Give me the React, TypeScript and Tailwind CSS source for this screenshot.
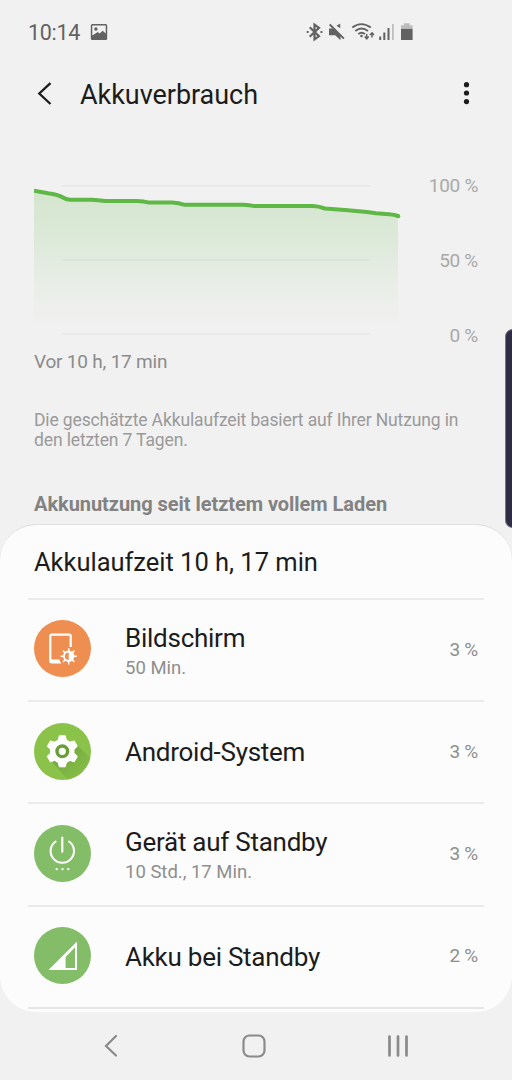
import type { ReactNode } from "react";

type UsageItem = {
  name: string;
  detail?: string;
  percent: string;
  icon: ReactNode;
};

function ScreenIcon() {
  return (
    <svg viewBox="0 0 57 57" className="mb-[3px] w-[57px] h-[57px] shrink-0">
      <circle cx="28.5" cy="28.5" r="28.5" fill="#ee8e50" />
      <path d="M27.500 43.500H17.700a2.500 2.500 0 0 1-2.500-2.500V16a2.500 2.500 0 0 1 2.500-2.500H35.300a2.500 2.500 0 0 1 2.500 2.500V27h-2.200V15.700H17.400V39.500h8Q25.800 42 27.500 43.500Z" fill="#fff" />
      <path d="M34.700 28.200v16.200M26.600 36.300h16.200M29 30.600l11.400 11.400M40.400 30.600l-11.400 11.400" stroke="#fff" strokeWidth="1.600" />
      <circle cx="34.700" cy="36.300" r="5.700" fill="#fff" />
      <path d="M34.700 32.500a3.800 3.800 0 0 0 0 7.600Z" fill="#ee8e50" />
    </svg>
  );
}

function SystemIcon() {
  return (
    <svg viewBox="0 0 57 57" className="mb-[2px] w-[57px] h-[57px] shrink-0">
      <defs>
        <linearGradient id="shadow" x1="0" y1="0" x2="1" y2="1">
          <stop offset="0.3" stopColor="#76ab40" />
          <stop offset="0.85" stopColor="#87bf48" />
        </linearGradient>
      </defs>
      <circle cx="28.5" cy="28.5" r="28.5" fill="#8bc34a" />
      <path d="M17.500 38 33.500 56.500A28.500 28.500 0 0 0 56.200 35L43 22Z" fill="url(#shadow)" />
      <g fill="#fff">
        <circle cx="28.300" cy="28.300" r="12.200" />
        <path id="teeth" d="M25.300 12.800h6l2 8h-10ZM25.300 43.800h6l2-8h-10Z" stroke="#fff" strokeWidth="1" strokeLinejoin="round" />
        <use href="#teeth" transform="rotate(60 28.3 28.3)" />
        <use href="#teeth" transform="rotate(120 28.3 28.3)" />
      </g>
      <circle cx="28.300" cy="28.300" r="5.300" fill="none" stroke="#689f38" strokeWidth="3.400" />
    </svg>
  );
}

function PowerIcon() {
  return (
    <svg viewBox="0 0 57 57" className="mb-[2px] w-[57px] h-[57px] shrink-0">
      <circle cx="28.5" cy="28.5" r="28.5" fill="#84bd67" />
      <path d="M28.300 12.500v14.300M21.600 16.500a11.700 11.700 0 1 0 13.400 0" fill="none" stroke="#fff" strokeWidth="2.100" strokeLinecap="round" />
      <g fill="#fff">
        <circle cx="22.700" cy="44.100" r="1.200" />
        <circle cx="28.500" cy="44.100" r="1.200" />
        <circle cx="34.300" cy="44.100" r="1.200" />
      </g>
    </svg>
  );
}

function SignalIcon() {
  return (
    <svg viewBox="0 0 57 57" className="mb-[3px] w-[57px] h-[57px] shrink-0">
      <circle cx="28.5" cy="28.5" r="28.5" fill="#84bd67" />
      <path d="M43 14.500V43H14.500Z" fill="#fff" />
      <path d="M41 20.300v20.700h-9.400V30Z" fill="#84bd67" />
    </svg>
  );
}

const items: UsageItem[] = [
  { name: "Bildschirm", detail: "50 Min.", percent: "3 %", icon: <ScreenIcon /> },
  { name: "Android-System", percent: "3 %", icon: <SystemIcon /> },
  { name: "Gerät auf Standby", detail: "10 Std., 17 Min.", percent: "3 %", icon: <PowerIcon /> },
  { name: "Akku bei Standby", percent: "2 %", icon: <SignalIcon /> },
];

function StatusBar() {
  return (
    <div className="flex h-16 items-center pl-7 text-[#626262]">
      <span className="mt-px text-[21.5px] leading-6 tracking-[-0.3px]">10:14</span>
      <svg viewBox="0 0 18 18" className="ml-[10px] w-[18px] h-[18px]">
        <path d="M2.300 1h13.400A1.500 1.500 0 0 1 17.200 2.500v13A1.500 1.500 0 0 1 15.700 17H2.300A1.500 1.500 0 0 1 .8 15.500v-13A1.500 1.500 0 0 1 2.300 1Z" fill="currentColor" />
        <path d="M2.300 2.500h13.400v8l-3-2.700-3.200 2.700-1.700-1.600-5.500 3.600Z" fill="#f1f1f1" />
        <circle cx="5.900" cy="6" r="1.700" fill="currentColor" />
      </svg>
      {/* bluetooth, mute, wifi, signal, battery */}
      <svg viewBox="306 22 108 20" className="ml-auto mr-[98px] w-[108px] h-5" fill="none" stroke="currentColor">
        <path d="M309.700 27.300l9.300 8.900-4.500 3.200v-14.800l4.500 3.200-9.300 8.900" strokeWidth="2.200" />
        <path d="M306.700 32h1.900M320.500 32h1.900" strokeWidth="2" />
        <path d="M329 28.500h4.200l7.300 7.300v4.400l-5.300-4.900h-6.200ZM340.200 23.600v4.700l-3.700-2.500Z" fill="currentColor" stroke="none" />
        <path d="M329.700 24.500l14.200 14.200" strokeWidth="1.900" />
        <path d="M352.300 27.600q9-7 18.500 0M355.300 31q6.300-5.100 12.700 0M358.300 34q3.300-2.600 6.700 0" strokeWidth="1.900" />
        <circle cx="361.500" cy="36" r="1.300" fill="currentColor" stroke="none" />
        <path d="M366.700 34v4.600M364.700 36.600l2 2.200 2-2.200M372 37.500v-4.700M370 35l2-2.200 2 2.200" strokeWidth="1.500" />
        <path d="M380.200 40v-3.500M384.300 40v-7.500M388.500 40V28" strokeWidth="2" />
        <path d="M392.900 40V24" strokeWidth="1.700" stroke="#bbb" />
        <path d="M401 28.800v-3.500h2.800v-2.100h5.800v2.100h3v3.500Z" fill="#bdbdbd" stroke="none" />
        <path d="M401 28.800h11.600V40H401Z" fill="currentColor" stroke="none" />
      </svg>
    </div>
  );
}

function UsageChart() {
  return (
    <div className="flex h-[166px] justify-between pl-[34px] pr-[34px]">
      <svg viewBox="34 178 368 166" className="w-[368px] h-[166px]">
        <defs>
          <linearGradient id="fade" x1="0" y1="0" x2="0" y2="1">
            <stop offset="0" stopColor="#5fb845" stopOpacity="0.2" />
            <stop offset="0.35" stopColor="#5fb845" stopOpacity="0.14" />
            <stop offset="0.7" stopColor="#5fb845" stopOpacity="0.05" />
            <stop offset="1" stopColor="#5fb845" stopOpacity="0" />
          </linearGradient>
        </defs>
        <path d="M62 185.700H370M62 260H370M62 334H370" stroke="#e6e7e6" strokeWidth="1.500" />
        <path d="M34 191 59 195.500 70 199.700H94L105 201H138L150 203H173L184 204.700H244L255 206H314L325 208.500 372 212 398 216V330H34Z" fill="url(#fade)" />
        <path
          d="M34 190.800 48 193.200Q58 194.600 62 197 66 199.600 70 199.700H92Q98 200 105 201H137Q144 201.300 149 202.600H172Q179 203 184 204.700H243Q249 205 255 206.100H313Q318 206.200 325 208.500L345 210 367 212 376 213.300 389 214.300Q396 215 398.500 216.300"
          fill="none"
          stroke="#5fb845"
          strokeWidth="4"
          strokeLinejoin="round"
        />
        <circle cx="398.300" cy="216.300" r="2" fill="#5fb845" />
      </svg>
      <div className="flex flex-col justify-between text-right text-[19px] leading-4 tracking-[-0.3px] text-[#a9a9a9]">
        <span>100 %</span>
        <span>50 %</span>
        <span>0 %</span>
      </div>
    </div>
  );
}

export default function App() {
  return (
    <div className="relative flex h-[1080px] w-[512px] flex-col overflow-hidden bg-[#f1f1f1] font-['Roboto',sans-serif]">
      <StatusBar />

      {/* Header */}
      <header className="flex h-[60px] items-center pl-[36px] pr-[42px] text-[#1c1c1c]">
        <svg viewBox="0 0 18 24" className="w-[18px] h-6" fill="none" stroke="currentColor" strokeWidth="2.300">
          <path d="M14.500 1.200 3.300 11.500 14.500 22" />
        </svg>
        <h1 className="ml-[26px] pt-px text-[27px] leading-8 tracking-[-0.05px]">Akkuverbrauch</h1>
        <svg viewBox="0 0 8 24" className="ml-auto w-2 h-6" fill="currentColor">
          <circle cx="4.500" cy="2.700" r="2.600" />
          <circle cx="4.500" cy="11" r="2.600" />
          <circle cx="4.500" cy="19.600" r="2.600" />
        </svg>
      </header>

      <div className="mt-[54px]">
        <UsageChart />
      </div>
      <p className="mt-[6px] pl-[34px] text-[19px] leading-6 tracking-[-0.2px] text-[#8b8b8b]">Vor 10 h, 17 min</p>
      <p className="mt-[36px] pl-[34px] text-[17.500px] leading-5 tracking-[-0.13px] text-[#9a9a9a]">
        Die geschätzte Akkulaufzeit basiert auf Ihrer Nutzung in
        <br />
        den letzten 7 Tagen.
      </p>
      <h2 className="mt-[42px] pl-[34px] text-[20px] font-bold leading-6 tracking-[-0.05px] text-[#828282]">Akkunutzung seit letztem vollem Laden</h2>

      {/* Usage since last full charge */}
      <section className="mt-[8px] h-[488px] shrink-0 overflow-hidden rounded-[36px] border-t border-[#dedede] bg-[#fcfcfc] px-7">
        <h3 className="flex h-[73px] items-center pl-[6px] pt-[2px] text-[25.500px] tracking-[-0.02px] text-[#1c1c1c]">Akkulaufzeit 10 h, 17 min</h3>
        {items.map((item) => (
          <div key={item.name} className="flex h-[102.200px] items-center border-t-2 border-[#ebebeb] pl-[6px] pr-[6px]">
            {item.icon}
            <div className="ml-[34px] flex-1">
              <p className={item.detail ? "pt-[3px] text-[26px] leading-8 tracking-[-0.26px] text-[#1c1c1c]" : "text-[26px] leading-8 tracking-[-0.26px] text-[#1c1c1c]"}>
                {item.name}
              </p>
              {item.detail && <p className="text-[18.500px] leading-[28px] text-[#8e8e8e]">{item.detail}</p>}
            </div>
            <span className="text-[19px] tracking-[-0.3px] text-[#8e8e8e]">{item.percent}</span>
          </div>
        ))}
        <div className="h-[2px] bg-[#e6e6e6]" />
      </section>

      {/* Navigation bar */}
      <nav className="flex h-[68px] items-center justify-between px-[103px] text-[#8a8a8a]">
        <svg viewBox="0 0 16 24" className="w-4 h-6" fill="none" stroke="currentColor" strokeWidth="2.200" strokeLinecap="round">
          <path d="M13 2 3 12l10 9.500" />
        </svg>
        <svg viewBox="0 0 24 24" className="ml-[2px] w-6 h-6" fill="none" stroke="currentColor" strokeWidth="2.200">
          <rect x="1.500" y="1.500" width="21" height="21" rx="6" />
        </svg>
        <svg viewBox="0 0 22 24" className="w-[22px] h-6" fill="none" stroke="currentColor" strokeWidth="2.700" strokeLinecap="round">
          <path d="M2.500 2.500v19M11 2.500v19M19.500 2.500v19" />
        </svg>
      </nav>

      {/* Edge panel */}
      <div className="absolute right-[-8px] top-[329px] h-[199px] w-[15px] rounded-lg border border-[#77778a] bg-[#2e2d43]" />
    </div>
  );
}
